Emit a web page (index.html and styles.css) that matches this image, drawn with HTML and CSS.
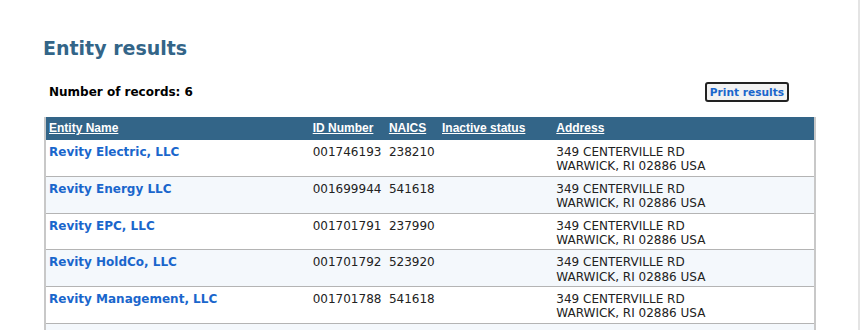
FILE: index.html
```
<!DOCTYPE html>
<html>
<head>
<meta charset="utf-8">
<link rel="stylesheet" href="styles.css">
</head>
<body>
<div class="page">
  <h1 class="title">Entity results</h1>
  <div class="toolbar">
    <span class="count">Number of records: 6</span>
    <button class="print">Print results</button>
  </div>
  <table class="results">
    <colgroup>
      <col class="c-name"><col class="c-id"><col class="c-naics"><col class="c-status"><col class="c-addr">
    </colgroup>
    <thead>
      <tr>
        <th><a href="#">Entity Name</a></th>
        <th><a href="#">ID Number</a></th>
        <th><a href="#">NAICS</a></th>
        <th><a href="#">Inactive status</a></th>
        <th><a href="#">Address</a></th>
      </tr>
    </thead>
    <tbody>
      <tr>
        <td><a href="#">Revity Electric, LLC</a></td>
        <td>001746193</td><td>238210</td><td></td>
        <td>349 CENTERVILLE RD<br>WARWICK, RI 02886 USA</td>
      </tr>
      <tr class="alt">
        <td><a href="#">Revity Energy LLC</a></td>
        <td>001699944</td><td>541618</td><td></td>
        <td>349 CENTERVILLE RD<br>WARWICK, RI 02886 USA</td>
      </tr>
      <tr>
        <td><a href="#">Revity EPC, LLC</a></td>
        <td>001701791</td><td>237990</td><td></td>
        <td>349 CENTERVILLE RD<br>WARWICK, RI 02886 USA</td>
      </tr>
      <tr class="alt">
        <td><a href="#">Revity HoldCo, LLC</a></td>
        <td>001701792</td><td>523920</td><td></td>
        <td>349 CENTERVILLE RD<br>WARWICK, RI 02886 USA</td>
      </tr>
      <tr>
        <td><a href="#">Revity Management, LLC</a></td>
        <td>001701788</td><td>541618</td><td></td>
        <td>349 CENTERVILLE RD<br>WARWICK, RI 02886 USA</td>
      </tr>
      <tr class="alt">
        <td></td><td></td><td></td><td></td><td></td>
      </tr>
    </tbody>
  </table>
</div>
</body>
</html>
```
FILE: styles.css
```
html, body {
  margin: 0;
  padding: 0;
  background: #ffffff;
}
body {
  font-family: "DejaVu Sans", Verdana, sans-serif;
  font-size: 12px;
  color: #222222;
  overflow: hidden;
}
.page {
  width: 858px;
  min-height: 330px;
  border-right: 2px solid #e4e4e4;
  padding: 36px 0 0 0;
  box-sizing: content-box;
}
.title {
  margin: 0 0 0 43px;
  font-size: 19px;
  line-height: 24px;
  font-weight: bold;
  color: #336588;
}
.toolbar {
  display: flex;
  justify-content: space-between;
  align-items: center;
  width: 740px;
  margin: 22px 0 0 49px;
  height: 20px;
}
.count {
  font-weight: bold;
  color: #000000;
  font-size: 12px;
}
.print {
  font-family: "DejaVu Sans", Verdana, sans-serif;
  font-size: 10.6px;
  font-weight: bold;
  color: #1a66cc;
  background: #f2f2f2;
  border: 2px solid #222222;
  border-radius: 3px;
  padding: 0 3px;
  height: 20px;
  line-height: 15px;
  white-space: nowrap;
  cursor: pointer;
}
.results {
  margin: 15px 0 0 44px;
  width: 772px;
  border-collapse: collapse;
  table-layout: fixed;
  border-left: 2px solid #c8c8c8;
  border-right: 2px solid #c8c8c8;
}
.c-name { width: 264px; }
.c-id { width: 76px; }
.c-naics { width: 53px; }
.c-status { width: 114px; }
.c-addr { width: 261px; }
.results thead tr {
  background: #336588;
}
.results th {
  text-align: left;
  padding: 4px 3px;
  line-height: 15px;
  font-family: "Liberation Sans", Arial, sans-serif;
  font-size: 12px;
  font-weight: bold;
  white-space: nowrap;
}
.results th a {
  color: #ffffff;
  text-decoration: underline;
}
.results td {
  vertical-align: top;
  padding: 5px 3px 2.25px 3px;
  line-height: 14.25px;
  border-bottom: 1px solid #b4b4b4;
  height: 28.5px;
  white-space: nowrap;
}
.results td a {
  color: #1a66cc;
  font-weight: bold;
  text-decoration: none;
}
.results tr.alt td {
  background: #f4f8fc;
}
```
